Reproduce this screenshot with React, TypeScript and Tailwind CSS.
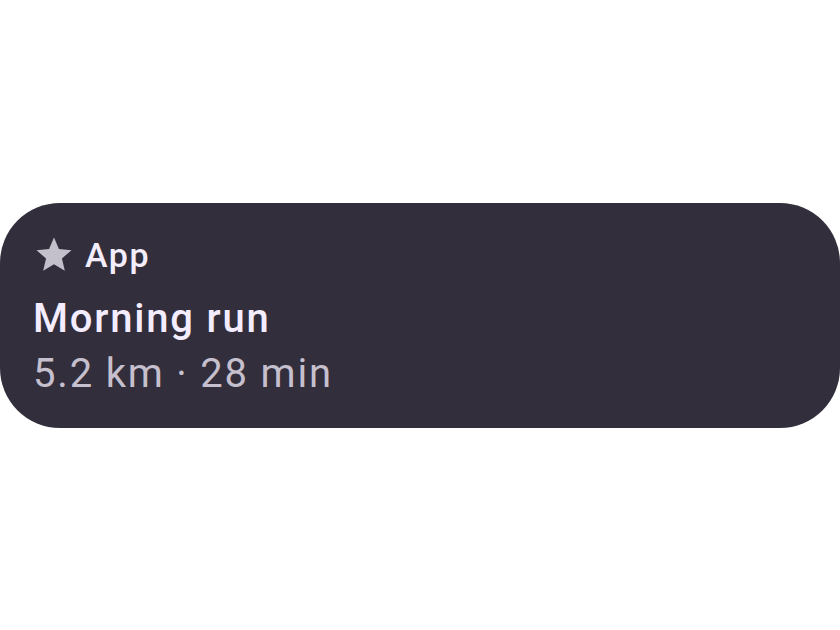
import React from 'react';

const StarIcon: React.FC<{ className?: string }> = ({ className }) => (
  <svg viewBox="0 0 24 24" className={className} fill="currentColor">
    <path d="M12 17.27 18.18 21l-1.64-7.03L22 9.24l-7.19-.61L12 2 9.19 8.63 2 9.24l5.46 4.73L5.82 21z" />
  </svg>
);

const App: React.FC = () => {
  return (
    <div
      className="min-h-screen w-full flex items-center bg-white"
      style={{ fontFamily: 'Roboto, "Noto Sans", sans-serif' }}
    >
      <div className="w-full h-[225px] rounded-[60px] bg-[#322e3c] pl-[33px] pt-[32px] flex flex-col">
        <div className="flex items-center h-[40px] gap-[10px]">
          <StarIcon className="w-[42px] h-[42px] text-[#c4c0cb] ml-0" />
          <span className="text-[34px] leading-[40px] font-medium tracking-[1.6px] text-[#f3edfb]">App</span>
        </div>
        <div className="mt-[20px] text-[40px] leading-[48px] font-medium tracking-[1.8px] text-[#f4ecff]">
          Morning run
        </div>
        <div className="mt-[7px] text-[40px] leading-[48px] tracking-[1.8px] text-[#c6c0ce]">
          5.2 km · 28 min
        </div>
      </div>
    </div>
  );
};

export default App;
